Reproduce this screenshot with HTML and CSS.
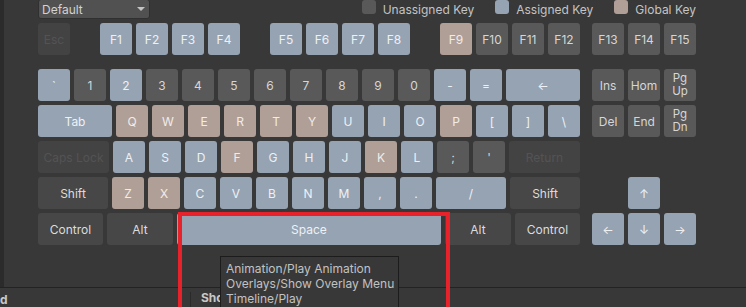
FILE: index.html
```html
<!DOCTYPE html>
<html lang="en">
<head>
    <meta charset="UTF-8">
    <title>Shortcuts</title>
    <link rel="stylesheet" href="styles.css">
</head>
<body>

<div class="window">
    <div class="main">
        <div class="side-strip"></div>
        <div class="content">
            <div class="toolbar">
                <div class="dropdown">
                    <span>Default</span>
                    <span class="caret"></span>
                </div>
                <div class="legend">
                    <div class="legend-item"><span class="swatch unassigned"></span>Unassigned Key</div>
                    <div class="legend-item"><span class="swatch assigned"></span>Assigned Key</div>
                    <div class="legend-item"><span class="swatch global"></span>Global Key</div>
                </div>
            </div>

            <div class="keyboard">
                <div class="row frow">
                    <div class="key disabled">Esc</div>
                    <div class="key assigned gap-f">F1</div>
                    <div class="key assigned">F2</div>
                    <div class="key assigned">F3</div>
                    <div class="key assigned">F4</div>
                    <div class="key assigned gap-f">F5</div>
                    <div class="key assigned">F6</div>
                    <div class="key assigned">F7</div>
                    <div class="key assigned">F8</div>
                    <div class="key global gap-f">F9</div>
                    <div class="key">F10</div>
                    <div class="key">F11</div>
                    <div class="key">F12</div>
                    <div class="key gap-nav">F13</div>
                    <div class="key">F14</div>
                    <div class="key">F15</div>
                </div>
                <div class="row">
                    <div class="key assigned">`</div>
                    <div class="key">1</div>
                    <div class="key assigned">2</div>
                    <div class="key">3</div>
                    <div class="key">4</div>
                    <div class="key">5</div>
                    <div class="key">6</div>
                    <div class="key">7</div>
                    <div class="key">8</div>
                    <div class="key">9</div>
                    <div class="key">0</div>
                    <div class="key assigned">-</div>
                    <div class="key assigned">=</div>
                    <div class="key assigned w74">←</div>
                    <div class="key gap-nav">Ins</div>
                    <div class="key">Hom</div>
                    <div class="key two-line"><span>Pg</span><span>Up</span></div>
                </div>
                <div class="row">
                    <div class="key assigned w74">Tab</div>
                    <div class="key global">Q</div>
                    <div class="key global">W</div>
                    <div class="key global">E</div>
                    <div class="key global">R</div>
                    <div class="key global">T</div>
                    <div class="key global">Y</div>
                    <div class="key assigned">U</div>
                    <div class="key assigned">I</div>
                    <div class="key assigned">O</div>
                    <div class="key global">P</div>
                    <div class="key assigned">[</div>
                    <div class="key assigned">]</div>
                    <div class="key assigned">\</div>
                    <div class="key gap-nav">Del</div>
                    <div class="key">End</div>
                    <div class="key two-line"><span>Pg</span><span>Dn</span></div>
                </div>
                <div class="row">
                    <div class="key disabled w71">Caps Lock</div>
                    <div class="key assigned">A</div>
                    <div class="key assigned">S</div>
                    <div class="key assigned">D</div>
                    <div class="key global">F</div>
                    <div class="key assigned">G</div>
                    <div class="key assigned">H</div>
                    <div class="key assigned">J</div>
                    <div class="key global">K</div>
                    <div class="key assigned">L</div>
                    <div class="key">;</div>
                    <div class="key">'</div>
                    <div class="key disabled w71">Return</div>
                </div>
                <div class="row">
                    <div class="key modifier w70">Shift</div>
                    <div class="key global">Z</div>
                    <div class="key global">X</div>
                    <div class="key assigned">C</div>
                    <div class="key assigned">V</div>
                    <div class="key assigned">B</div>
                    <div class="key assigned">N</div>
                    <div class="key assigned">M</div>
                    <div class="key assigned">,</div>
                    <div class="key assigned">.</div>
                    <div class="key assigned w70">/</div>
                    <div class="key modifier w70">Shift</div>
                    <div class="key assigned gap-up">↑</div>
                </div>
                <div class="row">
                    <div class="key modifier w65">Control</div>
                    <div class="key modifier w66">Alt</div>
                    <div class="key assigned w264">Space</div>
                    <div class="key modifier w66">Alt</div>
                    <div class="key modifier w65">Control</div>
                    <div class="key assigned gap-nav">←</div>
                    <div class="key assigned">↓</div>
                    <div class="key assigned">→</div>
                </div>
            </div>
        </div>
    </div>

    <div class="bottom-panel">
        <div class="cell cell-first">d</div>
        <div class="cell cell-second">Sho</div>
    </div>

    <div class="tooltip">
        <div>Animation/Play Animation</div>
        <div>Overlays/Show Overlay Menu</div>
        <div>Timeline/Play</div>
    </div>

    <div class="highlight"></div>
</div>

</body>
</html>
```

FILE: styles.css
```css
body {
    margin: 0;
    padding: 0;
    background-color: #383838;
    font-family: Inter, "Noto Sans", sans-serif;
    font-size: 12px;
    color: #c4c4c4;
    overflow: hidden;
}
.window {
    position: relative;
    width: 746px;
    height: 307px;
    overflow: hidden;
}
.main {
    display: flex;
    height: 287px;
}
.side-strip {
    width: 4px;
    background-color: #2b2b2b;
}
.content {
    padding-left: 34px;
}
.toolbar {
    display: flex;
    height: 19px;
    margin-bottom: 4px;
    width: 658px;
}
.dropdown {
    display: flex;
    align-items: center;
    justify-content: space-between;
    box-sizing: border-box;
    width: 112px;
    height: 20px;
    margin-top: -1px;
    padding: 0 4px 0 3px;
    background-color: #515151;
    border: 1px solid #303030;
    border-radius: 3px;
    color: #d2d2d2;
}
.caret {
    width: 0;
    height: 0;
    border-left: 4px solid transparent;
    border-right: 4px solid transparent;
    border-top: 4px solid #c4c4c4;
}
.legend {
    display: flex;
    margin-left: auto;
    gap: 21px;
}
.legend-item {
    display: flex;
    align-items: flex-start;
    line-height: 19px;
}
.swatch {
    width: 14px;
    height: 14px;
    margin-right: 7px;
    border-radius: 3px;
}
.swatch.unassigned {
    background-color: #595959;
}
.swatch.assigned {
    background-color: #96a3b3;
}
.swatch.global {
    background-color: #b09f97;
}
.keyboard {
    display: flex;
    flex-direction: column;
    gap: 4px;
}
.row {
    display: flex;
    gap: 4px;
    height: 32px;
}
.frow {
    margin-bottom: 10px;
}
.key {
    display: flex;
    align-items: center;
    justify-content: center;
    width: 32px;
    height: 32px;
    flex-shrink: 0;
    border-radius: 3px;
    background-color: #595959;
    color: #d6d6d6;
    white-space: nowrap;
}
.key.assigned {
    background-color: #96a3b3;
    color: #eef1f4;
}
.key.global {
    background-color: #b09f97;
    color: #f1ece9;
}
.key.modifier {
    background-color: #474747;
    color: #dcdcdc;
}
.key.disabled {
    background-color: #434343;
    color: #535353;
}
.two-line {
    flex-direction: column;
    font-size: 11.5px;
    line-height: 13px;
}
.w74 { width: 74px; }
.w71 { width: 71px; }
.w70 { width: 70px; }
.w66 { width: 66px; }
.w65 { width: 65px; }
.w264 { width: 264px; }
.gap-f {
    margin-left: 26px;
}
.gap-nav {
    margin-left: 8px;
}
.gap-up {
    margin-left: 44px;
}
.bottom-panel {
    display: flex;
    height: 19px;
    border-top: 1px solid #232323;
    font-weight: bold;
    color: #c8c8c8;
    line-height: 19px;
}
.cell-first {
    width: 190px;
    border-right: 1px solid #2a2a2a;
    margin-top: 4px;
    line-height: 15px;
}
.cell-second {
    padding-left: 10px;
}
.tooltip {
    position: absolute;
    left: 220px;
    top: 256px;
    width: 172px;
    height: 60px;
    padding: 4px 0 0 5px;
    background-color: #383838;
    border: 1px solid #1c1c1c;
    line-height: 15px;
    color: #c2c2c2;
}
.highlight {
    position: absolute;
    left: 178px;
    top: 212px;
    width: 264px;
    height: 95px;
    border: 4px solid #e8222b;
}
```
